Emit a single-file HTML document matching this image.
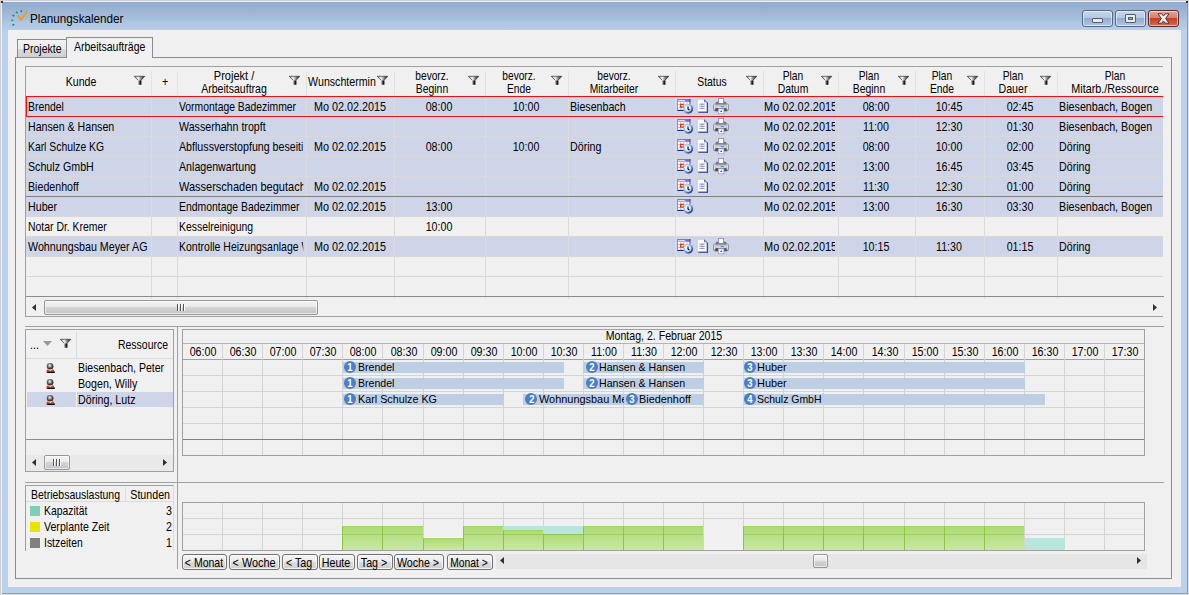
<!DOCTYPE html>
<html lang="de"><head><meta charset="utf-8"><title>Planungskalender</title>
<style>
html,body{margin:0;padding:0;}
body{width:1189px;height:595px;overflow:hidden;background:#b9d1ea;font-family:"Liberation Sans",sans-serif;font-size:13px;color:#000;position:relative;}
div,span{position:absolute;box-sizing:border-box;white-space:nowrap;}
svg{position:absolute;overflow:visible;}
.hl{background:#ced5e8;}
.btn{border:1px solid #707070;border-radius:3px;background:linear-gradient(#f4f4f4 0%,#ebebeb 48%,#dcdcdc 52%,#cfcfcf 100%);box-shadow:inset 0 0 0 1px rgba(255,255,255,.75);height:16px;}
.thumb{border:1px solid #979797;border-radius:2px;background:linear-gradient(#f3f3f3 0%,#e9e9ea 45%,#d5d5d8 50%,#c3c3c8 100%);box-shadow:inset 0 0 0 1px rgba(255,255,255,.6);}
.bar{background:#bfcfe3;height:11px;}
.num{width:12px;height:12px;border-radius:50%;background:#4a7ec6;}

</style></head><body>
<svg width="0" height="0" style="left:0;top:0"><defs><linearGradient id="fg" x1="0" x2="1"><stop offset="0" stop-color="#8a8a8a"/><stop offset=".38" stop-color="#f6f6f6"/><stop offset=".7" stop-color="#707070"/><stop offset="1" stop-color="#101010"/></linearGradient><linearGradient id="fs" x1="0" x2="1"><stop offset="0" stop-color="#a0a0a0"/><stop offset=".5" stop-color="#404040"/><stop offset="1" stop-color="#000"/></linearGradient><radialGradient id="hd" cx=".45" cy=".4" r=".62"><stop offset="0" stop-color="#fff"/><stop offset=".4" stop-color="#8a8a8a"/><stop offset=".85" stop-color="#2a2a2a"/><stop offset="1" stop-color="#1a1a1a"/></radialGradient><radialGradient id="cf" cx=".4" cy=".35" r=".8"><stop offset="0" stop-color="#fff"/><stop offset="1" stop-color="#bccadf"/></radialGradient><linearGradient id="pb" x1="0" x2="1"><stop offset="0" stop-color="#8a8c90"/><stop offset=".1" stop-color="#f4f4f4"/><stop offset=".25" stop-color="#a4a6aa"/><stop offset=".75" stop-color="#a4a6aa"/><stop offset=".9" stop-color="#f4f4f4"/><stop offset="1" stop-color="#7a7c80"/></linearGradient><linearGradient id="ck" x1="0" y1="0" x2="1" y2="1"><stop offset="0" stop-color="#e4f1ff"/><stop offset=".4" stop-color="#86b8ea"/><stop offset=".75" stop-color="#3654aa"/><stop offset="1" stop-color="#0e1658"/></linearGradient></defs></svg>
<div style="left:0px;top:0px;width:1189px;height:595px;background:#dcdcdc;"></div>
<div style="left:1px;top:1px;width:1187px;height:593px;background:#2fc3e8;"></div>
<div style="left:1px;top:1px;width:1186px;height:592px;background:#b9d1ea;"></div>
<div style="left:1px;top:2px;width:1186px;height:28px;background:linear-gradient(#93abd0 0%,#95b0d0 18%,#98b5d2 28%,#a3b5d5 36%,#a2bbda 50%,#a8c1de 64%,#b0c8e3 76%,#b2cae5 90%,#b7d1eb 100%);"></div>
<div style="left:0px;top:0px;width:1189px;height:1px;background:#d0d0d0;"></div>
<div style="left:0px;top:0px;width:1px;height:595px;background:#d0d0d0;"></div>
<div style="left:1px;top:1px;width:1187px;height:1px;background:#f0f0f0;"></div>
<div style="left:1px;top:1px;width:1px;height:593px;background:#f0f0f0;"></div>
<div style="left:1px;top:1px;width:2px;height:2px;background:#303030;"></div>
<div style="left:1186px;top:1px;width:2px;height:2px;background:#303030;"></div>
<div style="left:8px;top:30px;width:1173px;height:557px;background:#f0f0f0;"></div>
<svg style="left:10px;top:9px" width="18" height="18" viewBox="0 0 18 18"><g fill="#138a63"><ellipse cx="11.3" cy="2.2" rx=".8" ry="1.1" transform="rotate(15 11.3 2.2)"/><ellipse cx="6.8" cy="3.4" rx="1.1" ry=".8" transform="rotate(30 6.8 3.4)"/><ellipse cx="3.4" cy="6.6" rx="1.1" ry=".8" transform="rotate(20 3.4 6.6)"/><ellipse cx="2.2" cy="11.2" rx="1.1" ry=".7"/><ellipse cx="3.4" cy="15.8" rx="1.2" ry=".8" transform="rotate(-30 3.4 15.8)"/></g><path d="M8.6 7.2 L11.3 11 L16.6 2.6" fill="none" stroke="#f39a12" stroke-width="1.7" stroke-linecap="round" stroke-linejoin="round"/></svg>
<div style="top:11.00px;font-size:13px;line-height:15px;height:15px;left:30.4px;transform-origin:0 0;transform:scaleX(0.898);">Planungskalender</div>
<div style="left:1082px;top:10px;width:31px;height:17px;border:1px solid #56698a;border-radius:3px;background:linear-gradient(#c6d7ec 0%,#b4c8e2 45%,#93adcf 50%,#b0c6e2 100%);box-shadow:inset 0 0 0 1px rgba(255,255,255,.55);"></div>
<div style="left:1115px;top:10px;width:31px;height:17px;border:1px solid #56698a;border-radius:3px;background:linear-gradient(#c6d7ec 0%,#b4c8e2 45%,#93adcf 50%,#b0c6e2 100%);box-shadow:inset 0 0 0 1px rgba(255,255,255,.55);"></div>
<div style="left:1148px;top:10px;width:31px;height:17px;border:1px solid #5a2a2a;border-radius:3px;background:linear-gradient(#e3a597 0%,#d5806d 45%,#c1422a 50%,#cf6a4e 100%);box-shadow:inset 0 0 0 1px rgba(255,255,255,.55);"></div>
<div style="left:1092px;top:18px;width:11px;height:5px;background:#e9e9e9;border:1px solid #555e6e;border-radius:1px;"></div>
<div style="left:1125px;top:14px;width:11px;height:9px;background:#e9e9e9;border:1px solid #555e6e;border-radius:1px;"></div>
<div style="left:1128px;top:17px;width:5px;height:3px;background:#8da6c8;border:1px solid #555e6e;"></div>
<svg style="left:1157px;top:13px" width="13" height="11" viewBox="0 0 13 11"><path d="M1 0.8 L4.7 0.8 L6.5 3.1 L8.3 0.8 L12 0.8 L8.6 5.5 L12 10.2 L8.3 10.2 L6.5 7.9 L4.7 10.2 L1 10.2 L4.4 5.5 Z" fill="#f4f4f4" stroke="#54302c" stroke-width="1"/></svg>
<div style="left:15px;top:57px;width:1157px;height:522px;border:1px solid #898c95;"></div>
<div style="left:17px;top:39px;width:50px;height:18px;border:1px solid #898c95;border-bottom:none;background:linear-gradient(#f2f2f2 0%,#ebebeb 50%,#dddddd 50%,#cfcfcf 100%);"></div>
<div style="top:41.00px;font-size:13px;line-height:15px;height:15px;left:23px;transform-origin:0 0;transform:scaleX(0.809);">Projekte</div>
<div style="left:66px;top:37px;width:87px;height:21px;border:1px solid #898c95;border-bottom:none;background:#f0f0f0;"></div>
<div style="top:39.00px;font-size:13px;line-height:15px;height:15px;left:73.6px;transform-origin:0 0;transform:scaleX(0.809);">Arbeitsaufträge</div>
<div style="left:25px;top:66px;width:1139px;height:251px;border:1px solid #a0a0a0;border-right:none;"></div>
<div class="hl" style="left:26px;top:97px;width:1138px;height:20px;"></div>
<div class="hl" style="left:26px;top:117px;width:1138px;height:20px;"></div>
<div class="hl" style="left:26px;top:137px;width:1138px;height:20px;"></div>
<div class="hl" style="left:26px;top:157px;width:1138px;height:20px;"></div>
<div class="hl" style="left:26px;top:177px;width:1138px;height:20px;"></div>
<div class="hl" style="left:26px;top:197px;width:1138px;height:20px;"></div>
<div class="hl" style="left:26px;top:237px;width:1138px;height:20px;"></div>
<div style="left:26px;top:116px;width:1138px;height:1px;background:#d8d8da;"></div>
<div style="left:26px;top:136px;width:1138px;height:1px;background:#d8d8da;"></div>
<div style="left:26px;top:156px;width:1138px;height:1px;background:#d8d8da;"></div>
<div style="left:26px;top:176px;width:1138px;height:1px;background:#d8d8da;"></div>
<div style="left:26px;top:196px;width:1138px;height:1px;background:#d8d8da;"></div>
<div style="left:26px;top:216px;width:1138px;height:1px;background:#d8d8da;"></div>
<div style="left:26px;top:236px;width:1138px;height:1px;background:#d8d8da;"></div>
<div style="left:26px;top:256px;width:1138px;height:1px;background:#d8d8da;"></div>
<div style="left:26px;top:276px;width:1138px;height:1px;background:#d8d8da;"></div>
<div style="left:151px;top:71px;width:1px;height:25px;background:#e2e2e2;"></div>
<div style="left:151px;top:97px;width:1px;height:202px;background:#d9dbe0;"></div>
<div style="left:177px;top:71px;width:1px;height:25px;background:#e2e2e2;"></div>
<div style="left:177px;top:97px;width:1px;height:202px;background:#d9dbe0;"></div>
<div style="left:306px;top:71px;width:1px;height:25px;background:#e2e2e2;"></div>
<div style="left:306px;top:97px;width:1px;height:202px;background:#d9dbe0;"></div>
<div style="left:394px;top:71px;width:1px;height:25px;background:#e2e2e2;"></div>
<div style="left:394px;top:97px;width:1px;height:202px;background:#d9dbe0;"></div>
<div style="left:485px;top:71px;width:1px;height:25px;background:#e2e2e2;"></div>
<div style="left:485px;top:97px;width:1px;height:202px;background:#d9dbe0;"></div>
<div style="left:568px;top:71px;width:1px;height:25px;background:#e2e2e2;"></div>
<div style="left:568px;top:97px;width:1px;height:202px;background:#d9dbe0;"></div>
<div style="left:675px;top:71px;width:1px;height:25px;background:#e2e2e2;"></div>
<div style="left:675px;top:97px;width:1px;height:202px;background:#d9dbe0;"></div>
<div style="left:763px;top:71px;width:1px;height:25px;background:#e2e2e2;"></div>
<div style="left:763px;top:97px;width:1px;height:202px;background:#d9dbe0;"></div>
<div style="left:838px;top:71px;width:1px;height:25px;background:#e2e2e2;"></div>
<div style="left:838px;top:97px;width:1px;height:202px;background:#d9dbe0;"></div>
<div style="left:915px;top:71px;width:1px;height:25px;background:#e2e2e2;"></div>
<div style="left:915px;top:97px;width:1px;height:202px;background:#d9dbe0;"></div>
<div style="left:984px;top:71px;width:1px;height:25px;background:#e2e2e2;"></div>
<div style="left:984px;top:97px;width:1px;height:202px;background:#d9dbe0;"></div>
<div style="left:1057px;top:71px;width:1px;height:25px;background:#e2e2e2;"></div>
<div style="left:1057px;top:97px;width:1px;height:202px;background:#d9dbe0;"></div>
<div style="left:26px;top:196px;width:1138px;height:1px;background:#808080;"></div>
<div style="left:26px;top:96px;width:1139px;height:21px;border:1px solid #ee1111;border-right:none;"></div>
<div style="top:74.00px;font-size:13px;line-height:15px;height:15px;left:-69.25px;width:300px;text-align:center;transform-origin:50% 0;transform:scaleX(0.814);">Kunde</div>
<svg style="left:134px;top:76px" width="11" height="9" viewBox="0 0 11 9"><path d="M0.2 0.3 L10.8 0.3 L7.1 4.3 L7.1 8.7 L4.2 8.7 L4.2 4.3 Z" fill="url(#fg)"/><path d="M0.2 0.3 L10.8 0.3 M10.8 0.3 L7.1 4.3 L7.1 8.7 M0.2 0.3 L4.2 4.3" fill="none" stroke="#3a3a3a" stroke-width="0.7"/><rect x="4.3" y="4.6" width="2.8" height="4.1" fill="url(#fs)"/></svg>
<div style="top:74.00px;font-size:13px;line-height:15px;height:15px;left:14.5px;width:300px;text-align:center;transform-origin:50% 0;transform:scaleX(0.820);">+</div>
<div style="top:68.00px;font-size:13px;line-height:15px;height:15px;left:83.9px;width:300px;text-align:center;transform-origin:50% 0;transform:scaleX(0.847);">Projekt /</div>
<div style="top:81.00px;font-size:13px;line-height:15px;height:15px;left:83.9px;width:300px;text-align:center;transform-origin:50% 0;transform:scaleX(0.812);">Arbeitsauftrag</div>
<svg style="left:289px;top:76px" width="11" height="9" viewBox="0 0 11 9"><path d="M0.2 0.3 L10.8 0.3 L7.1 4.3 L7.1 8.7 L4.2 8.7 L4.2 4.3 Z" fill="url(#fg)"/><path d="M0.2 0.3 L10.8 0.3 M10.8 0.3 L7.1 4.3 L7.1 8.7 M0.2 0.3 L4.2 4.3" fill="none" stroke="#3a3a3a" stroke-width="0.7"/><rect x="4.3" y="4.6" width="2.8" height="4.1" fill="url(#fs)"/></svg>
<div style="top:74.00px;font-size:13px;line-height:15px;height:15px;left:192.3px;width:300px;text-align:center;transform-origin:50% 0;transform:scaleX(0.818);">Wunschtermin</div>
<svg style="left:377px;top:76px" width="11" height="9" viewBox="0 0 11 9"><path d="M0.2 0.3 L10.8 0.3 L7.1 4.3 L7.1 8.7 L4.2 8.7 L4.2 4.3 Z" fill="url(#fg)"/><path d="M0.2 0.3 L10.8 0.3 M10.8 0.3 L7.1 4.3 L7.1 8.7 M0.2 0.3 L4.2 4.3" fill="none" stroke="#3a3a3a" stroke-width="0.7"/><rect x="4.3" y="4.6" width="2.8" height="4.1" fill="url(#fs)"/></svg>
<div style="top:68.00px;font-size:13px;line-height:15px;height:15px;left:281.7px;width:300px;text-align:center;transform-origin:50% 0;transform:scaleX(0.781);">bevorz.</div>
<div style="top:81.00px;font-size:13px;line-height:15px;height:15px;left:281.7px;width:300px;text-align:center;transform-origin:50% 0;transform:scaleX(0.800);">Beginn</div>
<svg style="left:468px;top:76px" width="11" height="9" viewBox="0 0 11 9"><path d="M0.2 0.3 L10.8 0.3 L7.1 4.3 L7.1 8.7 L4.2 8.7 L4.2 4.3 Z" fill="url(#fg)"/><path d="M0.2 0.3 L10.8 0.3 M10.8 0.3 L7.1 4.3 L7.1 8.7 M0.2 0.3 L4.2 4.3" fill="none" stroke="#3a3a3a" stroke-width="0.7"/><rect x="4.3" y="4.6" width="2.8" height="4.1" fill="url(#fs)"/></svg>
<div style="top:68.00px;font-size:13px;line-height:15px;height:15px;left:368.65px;width:300px;text-align:center;transform-origin:50% 0;transform:scaleX(0.781);">bevorz.</div>
<div style="top:81.00px;font-size:13px;line-height:15px;height:15px;left:368.65px;width:300px;text-align:center;transform-origin:50% 0;transform:scaleX(0.790);">Ende</div>
<svg style="left:551px;top:76px" width="11" height="9" viewBox="0 0 11 9"><path d="M0.2 0.3 L10.8 0.3 L7.1 4.3 L7.1 8.7 L4.2 8.7 L4.2 4.3 Z" fill="url(#fg)"/><path d="M0.2 0.3 L10.8 0.3 M10.8 0.3 L7.1 4.3 L7.1 8.7 M0.2 0.3 L4.2 4.3" fill="none" stroke="#3a3a3a" stroke-width="0.7"/><rect x="4.3" y="4.6" width="2.8" height="4.1" fill="url(#fs)"/></svg>
<div style="top:68.00px;font-size:13px;line-height:15px;height:15px;left:463.85px;width:300px;text-align:center;transform-origin:50% 0;transform:scaleX(0.781);">bevorz.</div>
<div style="top:81.00px;font-size:13px;line-height:15px;height:15px;left:463.85px;width:300px;text-align:center;transform-origin:50% 0;transform:scaleX(0.788);">Mitarbeiter</div>
<svg style="left:658px;top:76px" width="11" height="9" viewBox="0 0 11 9"><path d="M0.2 0.3 L10.8 0.3 L7.1 4.3 L7.1 8.7 L4.2 8.7 L4.2 4.3 Z" fill="url(#fg)"/><path d="M0.2 0.3 L10.8 0.3 M10.8 0.3 L7.1 4.3 L7.1 8.7 M0.2 0.3 L4.2 4.3" fill="none" stroke="#3a3a3a" stroke-width="0.7"/><rect x="4.3" y="4.6" width="2.8" height="4.1" fill="url(#fs)"/></svg>
<div style="top:74.00px;font-size:13px;line-height:15px;height:15px;left:561.5px;width:300px;text-align:center;transform-origin:50% 0;transform:scaleX(0.798);">Status</div>
<svg style="left:746px;top:76px" width="11" height="9" viewBox="0 0 11 9"><path d="M0.2 0.3 L10.8 0.3 L7.1 4.3 L7.1 8.7 L4.2 8.7 L4.2 4.3 Z" fill="url(#fg)"/><path d="M0.2 0.3 L10.8 0.3 M10.8 0.3 L7.1 4.3 L7.1 8.7 M0.2 0.3 L4.2 4.3" fill="none" stroke="#3a3a3a" stroke-width="0.7"/><rect x="4.3" y="4.6" width="2.8" height="4.1" fill="url(#fs)"/></svg>
<div style="top:68.00px;font-size:13px;line-height:15px;height:15px;left:642.9px;width:300px;text-align:center;transform-origin:50% 0;transform:scaleX(0.788);">Plan</div>
<div style="top:81.00px;font-size:13px;line-height:15px;height:15px;left:642.9px;width:300px;text-align:center;transform-origin:50% 0;transform:scaleX(0.799);">Datum</div>
<svg style="left:821px;top:76px" width="11" height="9" viewBox="0 0 11 9"><path d="M0.2 0.3 L10.8 0.3 L7.1 4.3 L7.1 8.7 L4.2 8.7 L4.2 4.3 Z" fill="url(#fg)"/><path d="M0.2 0.3 L10.8 0.3 M10.8 0.3 L7.1 4.3 L7.1 8.7 M0.2 0.3 L4.2 4.3" fill="none" stroke="#3a3a3a" stroke-width="0.7"/><rect x="4.3" y="4.6" width="2.8" height="4.1" fill="url(#fs)"/></svg>
<div style="top:68.00px;font-size:13px;line-height:15px;height:15px;left:718.85px;width:300px;text-align:center;transform-origin:50% 0;transform:scaleX(0.788);">Plan</div>
<div style="top:81.00px;font-size:13px;line-height:15px;height:15px;left:718.85px;width:300px;text-align:center;transform-origin:50% 0;transform:scaleX(0.800);">Beginn</div>
<svg style="left:898px;top:76px" width="11" height="9" viewBox="0 0 11 9"><path d="M0.2 0.3 L10.8 0.3 L7.1 4.3 L7.1 8.7 L4.2 8.7 L4.2 4.3 Z" fill="url(#fg)"/><path d="M0.2 0.3 L10.8 0.3 M10.8 0.3 L7.1 4.3 L7.1 8.7 M0.2 0.3 L4.2 4.3" fill="none" stroke="#3a3a3a" stroke-width="0.7"/><rect x="4.3" y="4.6" width="2.8" height="4.1" fill="url(#fs)"/></svg>
<div style="top:68.00px;font-size:13px;line-height:15px;height:15px;left:791.85px;width:300px;text-align:center;transform-origin:50% 0;transform:scaleX(0.788);">Plan</div>
<div style="top:81.00px;font-size:13px;line-height:15px;height:15px;left:791.85px;width:300px;text-align:center;transform-origin:50% 0;transform:scaleX(0.790);">Ende</div>
<svg style="left:967px;top:76px" width="11" height="9" viewBox="0 0 11 9"><path d="M0.2 0.3 L10.8 0.3 L7.1 4.3 L7.1 8.7 L4.2 8.7 L4.2 4.3 Z" fill="url(#fg)"/><path d="M0.2 0.3 L10.8 0.3 M10.8 0.3 L7.1 4.3 L7.1 8.7 M0.2 0.3 L4.2 4.3" fill="none" stroke="#3a3a3a" stroke-width="0.7"/><rect x="4.3" y="4.6" width="2.8" height="4.1" fill="url(#fs)"/></svg>
<div style="top:68.00px;font-size:13px;line-height:15px;height:15px;left:862.8px;width:300px;text-align:center;transform-origin:50% 0;transform:scaleX(0.788);">Plan</div>
<div style="top:81.00px;font-size:13px;line-height:15px;height:15px;left:862.8px;width:300px;text-align:center;transform-origin:50% 0;transform:scaleX(0.816);">Dauer</div>
<svg style="left:1040px;top:76px" width="11" height="9" viewBox="0 0 11 9"><path d="M0.2 0.3 L10.8 0.3 L7.1 4.3 L7.1 8.7 L4.2 8.7 L4.2 4.3 Z" fill="url(#fg)"/><path d="M0.2 0.3 L10.8 0.3 M10.8 0.3 L7.1 4.3 L7.1 8.7 M0.2 0.3 L4.2 4.3" fill="none" stroke="#3a3a3a" stroke-width="0.7"/><rect x="4.3" y="4.6" width="2.8" height="4.1" fill="url(#fs)"/></svg>
<div style="top:68.00px;font-size:13px;line-height:15px;height:15px;left:965.2px;width:300px;text-align:center;transform-origin:50% 0;transform:scaleX(0.788);">Plan</div>
<div style="top:81.00px;font-size:13px;line-height:15px;height:15px;left:965.2px;width:300px;text-align:center;transform-origin:50% 0;transform:scaleX(0.829);">Mitarb./Ressource</div>
<div style="top:99.00px;font-size:13px;line-height:15px;height:15px;left:28px;transform-origin:0 0;width:150.5px;overflow:hidden;transform:scaleX(0.799);">Brendel</div>
<div style="top:99.00px;font-size:13px;line-height:15px;height:15px;left:179px;transform-origin:0 0;width:155.5px;overflow:hidden;transform:scaleX(0.798);">Vormontage Badezimmer</div>
<div style="top:99.00px;font-size:13px;line-height:15px;height:15px;left:199.7px;width:300px;text-align:center;transform-origin:50% 0;transform:scaleX(0.832);">Mo 02.02.2015</div>
<div style="top:99.00px;font-size:13px;line-height:15px;height:15px;left:289.1px;width:300px;text-align:center;transform-origin:50% 0;transform:scaleX(0.820);">08:00</div>
<div style="top:99.00px;font-size:13px;line-height:15px;height:15px;left:376.05px;width:300px;text-align:center;transform-origin:50% 0;transform:scaleX(0.820);">10:00</div>
<div style="top:99.00px;font-size:13px;line-height:15px;height:15px;left:570px;transform-origin:0 0;width:124.9px;overflow:hidden;transform:scaleX(0.818);">Biesenbach</div>
<svg style="left:677px;top:99px" width="16" height="15" viewBox="0 0 16 15"><rect x="0.3" y="0.3" width="12.8" height="11.2" fill="#fdfdff"/><path d="M1 5.6 H13 M1 8.6 H13 M3.8 3 V11 M6.9 3 V11 M10 3 V11" stroke="#b4b4c8" stroke-width="0.9" fill="none"/><rect x="0" y="0" width="13.3" height="2.6" fill="#7878ee"/><rect x="1.2" y="1.1" width="6.6" height="0.9" fill="#ececff"/><rect x="8.6" y="0.4" width="4.4" height="2.2" fill="#8a6ae0"/><rect x="0" y="0" width="1" height="11.6" fill="#8c8ce0"/><rect x="12.5" y="0" width="0.9" height="5.4" fill="#3434a0"/><rect x="0.4" y="10.9" width="7" height="1.1" fill="#26266a"/><path d="M6.6 5.4 H3.6 V8.1 H6.6 V6.9" fill="none" stroke="#e8380c" stroke-width="1.2"/><circle cx="11.2" cy="9.8" r="4.9" fill="url(#ck)"/><circle cx="11" cy="9.6" r="3.3" fill="url(#cf)"/><path d="M11 7.4 V10 L12.4 11" stroke="#101018" stroke-width="1.2" fill="none"/></svg>
<svg style="left:697px;top:99px" width="11" height="14" viewBox="0 0 11 14"><path d="M1.4 1.2 H8 L11 4 V13.8 H1.4 Z" fill="#1e2468"/><path d="M0.3 0.3 H7.4 L9.8 2.8 V12.6 H0.3 Z" fill="#fcfcfc" stroke="#a9c6ee" stroke-width="0.7"/><path d="M7.2 0.3 L10 3.2 H7.2 Z" fill="#28307a"/><circle cx="8.2" cy="2.2" r="0.7" fill="#c8d4f4"/><path d="M2.2 5.2 H7.8 M2.2 7.3 H7.8 M2.2 9.4 H7.8" stroke="#9a9aa6" stroke-width="0.9"/><path d="M4 5.2 H6.4 M4 7.3 H6.4 M4 9.4 H6.4" stroke="#7f86d8" stroke-width="0.9"/></svg>
<svg style="left:713px;top:98px" width="16" height="16" viewBox="0 0 16 16"><rect x="5.6" y="0.4" width="5" height="5" fill="#fdfdfd" stroke="#9288d8" stroke-width="0.9"/><path d="M3.4 3.8 H5.2 V5.4 H10.9 V3.8 H12.6 L14 6.8 H2 Z" fill="#6c6e72"/><rect x="0.2" y="5.6" width="15.6" height="7.6" rx="1.8" fill="#85878b"/><rect x="1.2" y="6.2" width="1.4" height="5.6" rx="0.7" fill="#f0f0f0"/><rect x="13.4" y="6.2" width="1.4" height="5.6" rx="0.7" fill="#f0f0f0"/><rect x="3" y="6.8" width="10" height="3.4" fill="#d2d3d6"/><rect x="3" y="6.8" width="10" height="0.9" fill="#b6b7ba"/><rect x="7.8" y="8" width="3.1" height="1.1" fill="#4a90f0"/><rect x="2.4" y="10.2" width="11.2" height="3" fill="#4c4e52"/><rect x="5.3" y="10.8" width="5.6" height="5" fill="#f6f8ff" stroke="#9aa2cc" stroke-width="0.8"/><path d="M8.2 11.9 L9.3 13.9 H7.1 Z" fill="#3450e0"/></svg>
<div style="top:99.00px;font-size:13px;line-height:15px;height:15px;left:763.7px;transform-origin:0 0;width:83.7px;overflow:hidden;transform:scaleX(0.844);">Mo 02.02.2015</div>
<div style="top:99.00px;font-size:13px;line-height:15px;height:15px;left:726.25px;width:300px;text-align:center;transform-origin:50% 0;transform:scaleX(0.820);">08:00</div>
<div style="top:99.00px;font-size:13px;line-height:15px;height:15px;left:799.25px;width:300px;text-align:center;transform-origin:50% 0;transform:scaleX(0.820);">10:45</div>
<div style="top:99.00px;font-size:13px;line-height:15px;height:15px;left:870.2px;width:300px;text-align:center;transform-origin:50% 0;transform:scaleX(0.820);">02:45</div>
<div style="top:99.00px;font-size:13px;line-height:15px;height:15px;left:1058.7px;transform-origin:0 0;width:127.2px;overflow:hidden;transform:scaleX(0.826);">Biesenbach, Bogen</div>
<div style="top:119.00px;font-size:13px;line-height:15px;height:15px;left:28px;transform-origin:0 0;width:147.1px;overflow:hidden;transform:scaleX(0.817);">Hansen &amp; Hansen</div>
<div style="top:119.00px;font-size:13px;line-height:15px;height:15px;left:179px;transform-origin:0 0;width:151.2px;overflow:hidden;transform:scaleX(0.820);">Wasserhahn tropft</div>
<svg style="left:677px;top:119px" width="16" height="15" viewBox="0 0 16 15"><rect x="0.3" y="0.3" width="12.8" height="11.2" fill="#fdfdff"/><path d="M1 5.6 H13 M1 8.6 H13 M3.8 3 V11 M6.9 3 V11 M10 3 V11" stroke="#b4b4c8" stroke-width="0.9" fill="none"/><rect x="0" y="0" width="13.3" height="2.6" fill="#7878ee"/><rect x="1.2" y="1.1" width="6.6" height="0.9" fill="#ececff"/><rect x="8.6" y="0.4" width="4.4" height="2.2" fill="#8a6ae0"/><rect x="0" y="0" width="1" height="11.6" fill="#8c8ce0"/><rect x="12.5" y="0" width="0.9" height="5.4" fill="#3434a0"/><rect x="0.4" y="10.9" width="7" height="1.1" fill="#26266a"/><path d="M6.6 5.4 H3.6 V8.1 H6.6 V6.9" fill="none" stroke="#e8380c" stroke-width="1.2"/><circle cx="11.2" cy="9.8" r="4.9" fill="url(#ck)"/><circle cx="11" cy="9.6" r="3.3" fill="url(#cf)"/><path d="M11 7.4 V10 L12.4 11" stroke="#101018" stroke-width="1.2" fill="none"/></svg>
<svg style="left:697px;top:119px" width="11" height="14" viewBox="0 0 11 14"><path d="M1.4 1.2 H8 L11 4 V13.8 H1.4 Z" fill="#1e2468"/><path d="M0.3 0.3 H7.4 L9.8 2.8 V12.6 H0.3 Z" fill="#fcfcfc" stroke="#a9c6ee" stroke-width="0.7"/><path d="M7.2 0.3 L10 3.2 H7.2 Z" fill="#28307a"/><circle cx="8.2" cy="2.2" r="0.7" fill="#c8d4f4"/><path d="M2.2 5.2 H7.8 M2.2 7.3 H7.8 M2.2 9.4 H7.8" stroke="#9a9aa6" stroke-width="0.9"/><path d="M4 5.2 H6.4 M4 7.3 H6.4 M4 9.4 H6.4" stroke="#7f86d8" stroke-width="0.9"/></svg>
<svg style="left:713px;top:118px" width="16" height="16" viewBox="0 0 16 16"><rect x="5.6" y="0.4" width="5" height="5" fill="#fdfdfd" stroke="#9288d8" stroke-width="0.9"/><path d="M3.4 3.8 H5.2 V5.4 H10.9 V3.8 H12.6 L14 6.8 H2 Z" fill="#6c6e72"/><rect x="0.2" y="5.6" width="15.6" height="7.6" rx="1.8" fill="#85878b"/><rect x="1.2" y="6.2" width="1.4" height="5.6" rx="0.7" fill="#f0f0f0"/><rect x="13.4" y="6.2" width="1.4" height="5.6" rx="0.7" fill="#f0f0f0"/><rect x="3" y="6.8" width="10" height="3.4" fill="#d2d3d6"/><rect x="3" y="6.8" width="10" height="0.9" fill="#b6b7ba"/><rect x="7.8" y="8" width="3.1" height="1.1" fill="#4a90f0"/><rect x="2.4" y="10.2" width="11.2" height="3" fill="#4c4e52"/><rect x="5.3" y="10.8" width="5.6" height="5" fill="#f6f8ff" stroke="#9aa2cc" stroke-width="0.8"/><path d="M8.2 11.9 L9.3 13.9 H7.1 Z" fill="#3450e0"/></svg>
<div style="top:119.00px;font-size:13px;line-height:15px;height:15px;left:763.7px;transform-origin:0 0;width:83.7px;overflow:hidden;transform:scaleX(0.844);">Mo 02.02.2015</div>
<div style="top:119.00px;font-size:13px;line-height:15px;height:15px;left:726.25px;width:300px;text-align:center;transform-origin:50% 0;transform:scaleX(0.820);">11:00</div>
<div style="top:119.00px;font-size:13px;line-height:15px;height:15px;left:799.25px;width:300px;text-align:center;transform-origin:50% 0;transform:scaleX(0.820);">12:30</div>
<div style="top:119.00px;font-size:13px;line-height:15px;height:15px;left:870.2px;width:300px;text-align:center;transform-origin:50% 0;transform:scaleX(0.820);">01:30</div>
<div style="top:119.00px;font-size:13px;line-height:15px;height:15px;left:1058.7px;transform-origin:0 0;width:127.2px;overflow:hidden;transform:scaleX(0.826);">Biesenbach, Bogen</div>
<div style="top:139.00px;font-size:13px;line-height:15px;height:15px;left:28px;transform-origin:0 0;width:150.8px;overflow:hidden;transform:scaleX(0.797);">Karl Schulze KG</div>
<div style="top:139.00px;font-size:13px;line-height:15px;height:15px;left:179px;transform-origin:0 0;width:151.2px;overflow:hidden;transform:scaleX(0.820);">Abflussverstopfung beseitigen</div>
<div style="top:139.00px;font-size:13px;line-height:15px;height:15px;left:199.7px;width:300px;text-align:center;transform-origin:50% 0;transform:scaleX(0.832);">Mo 02.02.2015</div>
<div style="top:139.00px;font-size:13px;line-height:15px;height:15px;left:289.1px;width:300px;text-align:center;transform-origin:50% 0;transform:scaleX(0.820);">08:00</div>
<div style="top:139.00px;font-size:13px;line-height:15px;height:15px;left:376.05px;width:300px;text-align:center;transform-origin:50% 0;transform:scaleX(0.820);">10:00</div>
<div style="top:139.00px;font-size:13px;line-height:15px;height:15px;left:570px;transform-origin:0 0;width:124.6px;overflow:hidden;transform:scaleX(0.820);">Döring</div>
<svg style="left:677px;top:139px" width="16" height="15" viewBox="0 0 16 15"><rect x="0.3" y="0.3" width="12.8" height="11.2" fill="#fdfdff"/><path d="M1 5.6 H13 M1 8.6 H13 M3.8 3 V11 M6.9 3 V11 M10 3 V11" stroke="#b4b4c8" stroke-width="0.9" fill="none"/><rect x="0" y="0" width="13.3" height="2.6" fill="#7878ee"/><rect x="1.2" y="1.1" width="6.6" height="0.9" fill="#ececff"/><rect x="8.6" y="0.4" width="4.4" height="2.2" fill="#8a6ae0"/><rect x="0" y="0" width="1" height="11.6" fill="#8c8ce0"/><rect x="12.5" y="0" width="0.9" height="5.4" fill="#3434a0"/><rect x="0.4" y="10.9" width="7" height="1.1" fill="#26266a"/><path d="M6.6 5.4 H3.6 V8.1 H6.6 V6.9" fill="none" stroke="#e8380c" stroke-width="1.2"/><circle cx="11.2" cy="9.8" r="4.9" fill="url(#ck)"/><circle cx="11" cy="9.6" r="3.3" fill="url(#cf)"/><path d="M11 7.4 V10 L12.4 11" stroke="#101018" stroke-width="1.2" fill="none"/></svg>
<svg style="left:697px;top:139px" width="11" height="14" viewBox="0 0 11 14"><path d="M1.4 1.2 H8 L11 4 V13.8 H1.4 Z" fill="#1e2468"/><path d="M0.3 0.3 H7.4 L9.8 2.8 V12.6 H0.3 Z" fill="#fcfcfc" stroke="#a9c6ee" stroke-width="0.7"/><path d="M7.2 0.3 L10 3.2 H7.2 Z" fill="#28307a"/><circle cx="8.2" cy="2.2" r="0.7" fill="#c8d4f4"/><path d="M2.2 5.2 H7.8 M2.2 7.3 H7.8 M2.2 9.4 H7.8" stroke="#9a9aa6" stroke-width="0.9"/><path d="M4 5.2 H6.4 M4 7.3 H6.4 M4 9.4 H6.4" stroke="#7f86d8" stroke-width="0.9"/></svg>
<svg style="left:713px;top:138px" width="16" height="16" viewBox="0 0 16 16"><rect x="5.6" y="0.4" width="5" height="5" fill="#fdfdfd" stroke="#9288d8" stroke-width="0.9"/><path d="M3.4 3.8 H5.2 V5.4 H10.9 V3.8 H12.6 L14 6.8 H2 Z" fill="#6c6e72"/><rect x="0.2" y="5.6" width="15.6" height="7.6" rx="1.8" fill="#85878b"/><rect x="1.2" y="6.2" width="1.4" height="5.6" rx="0.7" fill="#f0f0f0"/><rect x="13.4" y="6.2" width="1.4" height="5.6" rx="0.7" fill="#f0f0f0"/><rect x="3" y="6.8" width="10" height="3.4" fill="#d2d3d6"/><rect x="3" y="6.8" width="10" height="0.9" fill="#b6b7ba"/><rect x="7.8" y="8" width="3.1" height="1.1" fill="#4a90f0"/><rect x="2.4" y="10.2" width="11.2" height="3" fill="#4c4e52"/><rect x="5.3" y="10.8" width="5.6" height="5" fill="#f6f8ff" stroke="#9aa2cc" stroke-width="0.8"/><path d="M8.2 11.9 L9.3 13.9 H7.1 Z" fill="#3450e0"/></svg>
<div style="top:139.00px;font-size:13px;line-height:15px;height:15px;left:763.7px;transform-origin:0 0;width:83.7px;overflow:hidden;transform:scaleX(0.844);">Mo 02.02.2015</div>
<div style="top:139.00px;font-size:13px;line-height:15px;height:15px;left:726.25px;width:300px;text-align:center;transform-origin:50% 0;transform:scaleX(0.820);">08:00</div>
<div style="top:139.00px;font-size:13px;line-height:15px;height:15px;left:799.25px;width:300px;text-align:center;transform-origin:50% 0;transform:scaleX(0.820);">10:00</div>
<div style="top:139.00px;font-size:13px;line-height:15px;height:15px;left:870.2px;width:300px;text-align:center;transform-origin:50% 0;transform:scaleX(0.820);">02:00</div>
<div style="top:139.00px;font-size:13px;line-height:15px;height:15px;left:1058.7px;transform-origin:0 0;width:128.0px;overflow:hidden;transform:scaleX(0.820);">Döring</div>
<div style="top:159.00px;font-size:13px;line-height:15px;height:15px;left:28px;transform-origin:0 0;width:146.6px;overflow:hidden;transform:scaleX(0.820);">Schulz GmbH</div>
<div style="top:159.00px;font-size:13px;line-height:15px;height:15px;left:179px;transform-origin:0 0;width:151.2px;overflow:hidden;transform:scaleX(0.820);">Anlagenwartung</div>
<svg style="left:677px;top:159px" width="16" height="15" viewBox="0 0 16 15"><rect x="0.3" y="0.3" width="12.8" height="11.2" fill="#fdfdff"/><path d="M1 5.6 H13 M1 8.6 H13 M3.8 3 V11 M6.9 3 V11 M10 3 V11" stroke="#b4b4c8" stroke-width="0.9" fill="none"/><rect x="0" y="0" width="13.3" height="2.6" fill="#7878ee"/><rect x="1.2" y="1.1" width="6.6" height="0.9" fill="#ececff"/><rect x="8.6" y="0.4" width="4.4" height="2.2" fill="#8a6ae0"/><rect x="0" y="0" width="1" height="11.6" fill="#8c8ce0"/><rect x="12.5" y="0" width="0.9" height="5.4" fill="#3434a0"/><rect x="0.4" y="10.9" width="7" height="1.1" fill="#26266a"/><path d="M6.6 5.4 H3.6 V8.1 H6.6 V6.9" fill="none" stroke="#e8380c" stroke-width="1.2"/><circle cx="11.2" cy="9.8" r="4.9" fill="url(#ck)"/><circle cx="11" cy="9.6" r="3.3" fill="url(#cf)"/><path d="M11 7.4 V10 L12.4 11" stroke="#101018" stroke-width="1.2" fill="none"/></svg>
<svg style="left:697px;top:159px" width="11" height="14" viewBox="0 0 11 14"><path d="M1.4 1.2 H8 L11 4 V13.8 H1.4 Z" fill="#1e2468"/><path d="M0.3 0.3 H7.4 L9.8 2.8 V12.6 H0.3 Z" fill="#fcfcfc" stroke="#a9c6ee" stroke-width="0.7"/><path d="M7.2 0.3 L10 3.2 H7.2 Z" fill="#28307a"/><circle cx="8.2" cy="2.2" r="0.7" fill="#c8d4f4"/><path d="M2.2 5.2 H7.8 M2.2 7.3 H7.8 M2.2 9.4 H7.8" stroke="#9a9aa6" stroke-width="0.9"/><path d="M4 5.2 H6.4 M4 7.3 H6.4 M4 9.4 H6.4" stroke="#7f86d8" stroke-width="0.9"/></svg>
<svg style="left:713px;top:158px" width="16" height="16" viewBox="0 0 16 16"><rect x="5.6" y="0.4" width="5" height="5" fill="#fdfdfd" stroke="#9288d8" stroke-width="0.9"/><path d="M3.4 3.8 H5.2 V5.4 H10.9 V3.8 H12.6 L14 6.8 H2 Z" fill="#6c6e72"/><rect x="0.2" y="5.6" width="15.6" height="7.6" rx="1.8" fill="#85878b"/><rect x="1.2" y="6.2" width="1.4" height="5.6" rx="0.7" fill="#f0f0f0"/><rect x="13.4" y="6.2" width="1.4" height="5.6" rx="0.7" fill="#f0f0f0"/><rect x="3" y="6.8" width="10" height="3.4" fill="#d2d3d6"/><rect x="3" y="6.8" width="10" height="0.9" fill="#b6b7ba"/><rect x="7.8" y="8" width="3.1" height="1.1" fill="#4a90f0"/><rect x="2.4" y="10.2" width="11.2" height="3" fill="#4c4e52"/><rect x="5.3" y="10.8" width="5.6" height="5" fill="#f6f8ff" stroke="#9aa2cc" stroke-width="0.8"/><path d="M8.2 11.9 L9.3 13.9 H7.1 Z" fill="#3450e0"/></svg>
<div style="top:159.00px;font-size:13px;line-height:15px;height:15px;left:763.7px;transform-origin:0 0;width:83.7px;overflow:hidden;transform:scaleX(0.844);">Mo 02.02.2015</div>
<div style="top:159.00px;font-size:13px;line-height:15px;height:15px;left:726.25px;width:300px;text-align:center;transform-origin:50% 0;transform:scaleX(0.820);">13:00</div>
<div style="top:159.00px;font-size:13px;line-height:15px;height:15px;left:799.25px;width:300px;text-align:center;transform-origin:50% 0;transform:scaleX(0.820);">16:45</div>
<div style="top:159.00px;font-size:13px;line-height:15px;height:15px;left:870.2px;width:300px;text-align:center;transform-origin:50% 0;transform:scaleX(0.820);">03:45</div>
<div style="top:159.00px;font-size:13px;line-height:15px;height:15px;left:1058.7px;transform-origin:0 0;width:128.0px;overflow:hidden;transform:scaleX(0.820);">Döring</div>
<div style="top:179.00px;font-size:13px;line-height:15px;height:15px;left:28px;transform-origin:0 0;width:146.6px;overflow:hidden;transform:scaleX(0.820);">Biedenhoff</div>
<div style="top:179.00px;font-size:13px;line-height:15px;height:15px;left:179px;transform-origin:0 0;width:146.6px;overflow:hidden;transform:scaleX(0.846);">Wasserschaden begutachten</div>
<div style="top:179.00px;font-size:13px;line-height:15px;height:15px;left:199.7px;width:300px;text-align:center;transform-origin:50% 0;transform:scaleX(0.832);">Mo 02.02.2015</div>
<svg style="left:677px;top:179px" width="16" height="15" viewBox="0 0 16 15"><rect x="0.3" y="0.3" width="12.8" height="11.2" fill="#fdfdff"/><path d="M1 5.6 H13 M1 8.6 H13 M3.8 3 V11 M6.9 3 V11 M10 3 V11" stroke="#b4b4c8" stroke-width="0.9" fill="none"/><rect x="0" y="0" width="13.3" height="2.6" fill="#7878ee"/><rect x="1.2" y="1.1" width="6.6" height="0.9" fill="#ececff"/><rect x="8.6" y="0.4" width="4.4" height="2.2" fill="#8a6ae0"/><rect x="0" y="0" width="1" height="11.6" fill="#8c8ce0"/><rect x="12.5" y="0" width="0.9" height="5.4" fill="#3434a0"/><rect x="0.4" y="10.9" width="7" height="1.1" fill="#26266a"/><path d="M6.6 5.4 H3.6 V8.1 H6.6 V6.9" fill="none" stroke="#e8380c" stroke-width="1.2"/><circle cx="11.2" cy="9.8" r="4.9" fill="url(#ck)"/><circle cx="11" cy="9.6" r="3.3" fill="url(#cf)"/><path d="M11 7.4 V10 L12.4 11" stroke="#101018" stroke-width="1.2" fill="none"/></svg>
<svg style="left:697px;top:179px" width="11" height="14" viewBox="0 0 11 14"><path d="M1.4 1.2 H8 L11 4 V13.8 H1.4 Z" fill="#1e2468"/><path d="M0.3 0.3 H7.4 L9.8 2.8 V12.6 H0.3 Z" fill="#fcfcfc" stroke="#a9c6ee" stroke-width="0.7"/><path d="M7.2 0.3 L10 3.2 H7.2 Z" fill="#28307a"/><circle cx="8.2" cy="2.2" r="0.7" fill="#c8d4f4"/><path d="M2.2 5.2 H7.8 M2.2 7.3 H7.8 M2.2 9.4 H7.8" stroke="#9a9aa6" stroke-width="0.9"/><path d="M4 5.2 H6.4 M4 7.3 H6.4 M4 9.4 H6.4" stroke="#7f86d8" stroke-width="0.9"/></svg>
<div style="top:179.00px;font-size:13px;line-height:15px;height:15px;left:763.7px;transform-origin:0 0;width:83.7px;overflow:hidden;transform:scaleX(0.844);">Mo 02.02.2015</div>
<div style="top:179.00px;font-size:13px;line-height:15px;height:15px;left:726.25px;width:300px;text-align:center;transform-origin:50% 0;transform:scaleX(0.820);">11:30</div>
<div style="top:179.00px;font-size:13px;line-height:15px;height:15px;left:799.25px;width:300px;text-align:center;transform-origin:50% 0;transform:scaleX(0.820);">12:30</div>
<div style="top:179.00px;font-size:13px;line-height:15px;height:15px;left:870.2px;width:300px;text-align:center;transform-origin:50% 0;transform:scaleX(0.820);">01:00</div>
<div style="top:179.00px;font-size:13px;line-height:15px;height:15px;left:1058.7px;transform-origin:0 0;width:128.0px;overflow:hidden;transform:scaleX(0.820);">Döring</div>
<div style="top:199.00px;font-size:13px;line-height:15px;height:15px;left:28px;transform-origin:0 0;width:146.6px;overflow:hidden;transform:scaleX(0.820);">Huber</div>
<div style="top:199.00px;font-size:13px;line-height:15px;height:15px;left:179px;transform-origin:0 0;width:154.7px;overflow:hidden;transform:scaleX(0.802);">Endmontage Badezimmer</div>
<div style="top:199.00px;font-size:13px;line-height:15px;height:15px;left:199.7px;width:300px;text-align:center;transform-origin:50% 0;transform:scaleX(0.832);">Mo 02.02.2015</div>
<div style="top:199.00px;font-size:13px;line-height:15px;height:15px;left:289.1px;width:300px;text-align:center;transform-origin:50% 0;transform:scaleX(0.820);">13:00</div>
<svg style="left:677px;top:199px" width="16" height="15" viewBox="0 0 16 15"><rect x="0.3" y="0.3" width="12.8" height="11.2" fill="#fdfdff"/><path d="M1 5.6 H13 M1 8.6 H13 M3.8 3 V11 M6.9 3 V11 M10 3 V11" stroke="#b4b4c8" stroke-width="0.9" fill="none"/><rect x="0" y="0" width="13.3" height="2.6" fill="#7878ee"/><rect x="1.2" y="1.1" width="6.6" height="0.9" fill="#ececff"/><rect x="8.6" y="0.4" width="4.4" height="2.2" fill="#8a6ae0"/><rect x="0" y="0" width="1" height="11.6" fill="#8c8ce0"/><rect x="12.5" y="0" width="0.9" height="5.4" fill="#3434a0"/><rect x="0.4" y="10.9" width="7" height="1.1" fill="#26266a"/><path d="M6.6 5.4 H3.6 V8.1 H6.6 V6.9" fill="none" stroke="#e8380c" stroke-width="1.2"/><circle cx="11.2" cy="9.8" r="4.9" fill="url(#ck)"/><circle cx="11" cy="9.6" r="3.3" fill="url(#cf)"/><path d="M11 7.4 V10 L12.4 11" stroke="#101018" stroke-width="1.2" fill="none"/></svg>
<div style="top:199.00px;font-size:13px;line-height:15px;height:15px;left:763.7px;transform-origin:0 0;width:83.7px;overflow:hidden;transform:scaleX(0.844);">Mo 02.02.2015</div>
<div style="top:199.00px;font-size:13px;line-height:15px;height:15px;left:726.25px;width:300px;text-align:center;transform-origin:50% 0;transform:scaleX(0.820);">13:00</div>
<div style="top:199.00px;font-size:13px;line-height:15px;height:15px;left:799.25px;width:300px;text-align:center;transform-origin:50% 0;transform:scaleX(0.820);">16:30</div>
<div style="top:199.00px;font-size:13px;line-height:15px;height:15px;left:870.2px;width:300px;text-align:center;transform-origin:50% 0;transform:scaleX(0.820);">03:30</div>
<div style="top:199.00px;font-size:13px;line-height:15px;height:15px;left:1058.7px;transform-origin:0 0;width:127.2px;overflow:hidden;transform:scaleX(0.826);">Biesenbach, Bogen</div>
<div style="top:219.00px;font-size:13px;line-height:15px;height:15px;left:28px;transform-origin:0 0;width:149.9px;overflow:hidden;transform:scaleX(0.802);">Notar Dr. Kremer</div>
<div style="top:219.00px;font-size:13px;line-height:15px;height:15px;left:179px;transform-origin:0 0;width:154.8px;overflow:hidden;transform:scaleX(0.801);">Kesselreinigung</div>
<div style="top:219.00px;font-size:13px;line-height:15px;height:15px;left:289.1px;width:300px;text-align:center;transform-origin:50% 0;transform:scaleX(0.820);">10:00</div>
<div style="top:239.00px;font-size:13px;line-height:15px;height:15px;left:28px;transform-origin:0 0;width:145.9px;overflow:hidden;transform:scaleX(0.824);">Wohnungsbau Meyer AG</div>
<div style="top:239.00px;font-size:13px;line-height:15px;height:15px;left:179px;transform-origin:0 0;width:153.7px;overflow:hidden;transform:scaleX(0.807);">Kontrolle Heizungsanlage Wartung</div>
<div style="top:239.00px;font-size:13px;line-height:15px;height:15px;left:199.7px;width:300px;text-align:center;transform-origin:50% 0;transform:scaleX(0.832);">Mo 02.02.2015</div>
<svg style="left:677px;top:239px" width="16" height="15" viewBox="0 0 16 15"><rect x="0.3" y="0.3" width="12.8" height="11.2" fill="#fdfdff"/><path d="M1 5.6 H13 M1 8.6 H13 M3.8 3 V11 M6.9 3 V11 M10 3 V11" stroke="#b4b4c8" stroke-width="0.9" fill="none"/><rect x="0" y="0" width="13.3" height="2.6" fill="#7878ee"/><rect x="1.2" y="1.1" width="6.6" height="0.9" fill="#ececff"/><rect x="8.6" y="0.4" width="4.4" height="2.2" fill="#8a6ae0"/><rect x="0" y="0" width="1" height="11.6" fill="#8c8ce0"/><rect x="12.5" y="0" width="0.9" height="5.4" fill="#3434a0"/><rect x="0.4" y="10.9" width="7" height="1.1" fill="#26266a"/><path d="M6.6 5.4 H3.6 V8.1 H6.6 V6.9" fill="none" stroke="#e8380c" stroke-width="1.2"/><circle cx="11.2" cy="9.8" r="4.9" fill="url(#ck)"/><circle cx="11" cy="9.6" r="3.3" fill="url(#cf)"/><path d="M11 7.4 V10 L12.4 11" stroke="#101018" stroke-width="1.2" fill="none"/></svg>
<svg style="left:697px;top:239px" width="11" height="14" viewBox="0 0 11 14"><path d="M1.4 1.2 H8 L11 4 V13.8 H1.4 Z" fill="#1e2468"/><path d="M0.3 0.3 H7.4 L9.8 2.8 V12.6 H0.3 Z" fill="#fcfcfc" stroke="#a9c6ee" stroke-width="0.7"/><path d="M7.2 0.3 L10 3.2 H7.2 Z" fill="#28307a"/><circle cx="8.2" cy="2.2" r="0.7" fill="#c8d4f4"/><path d="M2.2 5.2 H7.8 M2.2 7.3 H7.8 M2.2 9.4 H7.8" stroke="#9a9aa6" stroke-width="0.9"/><path d="M4 5.2 H6.4 M4 7.3 H6.4 M4 9.4 H6.4" stroke="#7f86d8" stroke-width="0.9"/></svg>
<svg style="left:713px;top:238px" width="16" height="16" viewBox="0 0 16 16"><rect x="5.6" y="0.4" width="5" height="5" fill="#fdfdfd" stroke="#9288d8" stroke-width="0.9"/><path d="M3.4 3.8 H5.2 V5.4 H10.9 V3.8 H12.6 L14 6.8 H2 Z" fill="#6c6e72"/><rect x="0.2" y="5.6" width="15.6" height="7.6" rx="1.8" fill="#85878b"/><rect x="1.2" y="6.2" width="1.4" height="5.6" rx="0.7" fill="#f0f0f0"/><rect x="13.4" y="6.2" width="1.4" height="5.6" rx="0.7" fill="#f0f0f0"/><rect x="3" y="6.8" width="10" height="3.4" fill="#d2d3d6"/><rect x="3" y="6.8" width="10" height="0.9" fill="#b6b7ba"/><rect x="7.8" y="8" width="3.1" height="1.1" fill="#4a90f0"/><rect x="2.4" y="10.2" width="11.2" height="3" fill="#4c4e52"/><rect x="5.3" y="10.8" width="5.6" height="5" fill="#f6f8ff" stroke="#9aa2cc" stroke-width="0.8"/><path d="M8.2 11.9 L9.3 13.9 H7.1 Z" fill="#3450e0"/></svg>
<div style="top:239.00px;font-size:13px;line-height:15px;height:15px;left:763.7px;transform-origin:0 0;width:83.7px;overflow:hidden;transform:scaleX(0.844);">Mo 02.02.2015</div>
<div style="top:239.00px;font-size:13px;line-height:15px;height:15px;left:726.25px;width:300px;text-align:center;transform-origin:50% 0;transform:scaleX(0.820);">10:15</div>
<div style="top:239.00px;font-size:13px;line-height:15px;height:15px;left:799.25px;width:300px;text-align:center;transform-origin:50% 0;transform:scaleX(0.820);">11:30</div>
<div style="top:239.00px;font-size:13px;line-height:15px;height:15px;left:870.2px;width:300px;text-align:center;transform-origin:50% 0;transform:scaleX(0.820);">01:15</div>
<div style="top:239.00px;font-size:13px;line-height:15px;height:15px;left:1058.7px;transform-origin:0 0;width:128.0px;overflow:hidden;transform:scaleX(0.820);">Döring</div>
<div style="left:1163px;top:60px;width:8px;height:262px;background:#f0f0f0;"></div>
<div style="left:26px;top:296px;width:1138px;height:1px;background:#8c8c8c;"></div>
<div class="thumb" style="left:44px;top:300px;width:274px;height:15px;"></div>
<svg style="left:177px;top:304px" width="8" height="7" viewBox="0 0 8 7"><path d="M0.5 0 V7 M3.5 0 V7 M6.5 0 V7" stroke="#555" stroke-width="1"/><path d="M1.5 0 V7 M4.5 0 V7 M7.5 0 V7" stroke="#fff" stroke-width="1"/></svg>
<svg style="left:31.5px;top:304px" width="4" height="7" viewBox="0 0 4 7"><path d="M4 0 L0 3.5 L4 7 Z" fill="#303030"/></svg>
<svg style="left:1153px;top:304px" width="4" height="7" viewBox="0 0 4 7"><path d="M0 0 L4 3.5 L0 7 Z" fill="#303030"/></svg>
<div style="left:25px;top:326px;width:1139px;height:1px;background:#a0a0a0;"></div>
<div style="left:25px;top:482px;width:1139px;height:1px;background:#a0a0a0;"></div>
<div style="left:177px;top:327px;width:1px;height:242px;background:#a0a0a0;"></div>
<div style="left:25px;top:329px;width:149px;height:143px;border:1px solid #a0a0a0;"></div>
<div style="left:76px;top:331px;width:1px;height:27px;background:#dcdcdc;"></div>
<div style="left:26px;top:358px;width:147px;height:1px;background:#dcdcdc;"></div>
<div style="top:337.00px;font-size:13px;line-height:15px;height:15px;left:29.5px;transform-origin:0 0;transform:scaleX(0.820);">...</div>
<svg style="left:43px;top:341px" width="9" height="5" viewBox="0 0 9 5"><path d="M0 0 H9 L4.5 5 Z" fill="#9c9a86"/></svg>
<svg style="left:59.5px;top:339px" width="11" height="9" viewBox="0 0 11 9"><path d="M0.2 0.3 L10.8 0.3 L7.1 4.3 L7.1 8.7 L4.2 8.7 L4.2 4.3 Z" fill="url(#fg)"/><path d="M0.2 0.3 L10.8 0.3 M10.8 0.3 L7.1 4.3 L7.1 8.7 M0.2 0.3 L4.2 4.3" fill="none" stroke="#3a3a3a" stroke-width="0.7"/><rect x="4.3" y="4.6" width="2.8" height="4.1" fill="url(#fs)"/></svg>
<div style="top:337.00px;font-size:13px;line-height:15px;height:15px;left:-131.8px;width:300px;text-align:right;transform-origin:100% 0;transform:scaleX(0.805);">Ressource</div>
<svg style="left:45.8px;top:363px" width="9" height="10" viewBox="0 0 9 10"><path d="M0.1 9.4 Q0.4 5.4 4.3 5.4 Q8.2 5.4 8.7 9.4 Z" fill="#e2501a"/><path d="M2 6.3 L4.3 8 L6.6 6.3 L5.6 5.4 H3 Z" fill="#fff"/><circle cx="4.1" cy="3.2" r="3.3" fill="url(#hd)"/><rect x="1.2" y="8.6" width="7.6" height="1.4" fill="#101010"/><rect x="6.7" y="7.1" width="1" height="1" fill="#4a6ae0"/></svg>
<div style="top:360.00px;font-size:13px;line-height:15px;height:15px;left:78.1px;transform-origin:0 0;width:116.1px;overflow:hidden;transform:scaleX(0.810);">Biesenbach, Peter</div>
<svg style="left:45.8px;top:379px" width="9" height="10" viewBox="0 0 9 10"><path d="M0.1 9.4 Q0.4 5.4 4.3 5.4 Q8.2 5.4 8.7 9.4 Z" fill="#e2501a"/><path d="M2 6.3 L4.3 8 L6.6 6.3 L5.6 5.4 H3 Z" fill="#fff"/><circle cx="4.1" cy="3.2" r="3.3" fill="url(#hd)"/><rect x="1.2" y="8.6" width="7.6" height="1.4" fill="#101010"/><rect x="6.7" y="7.1" width="1" height="1" fill="#4a6ae0"/></svg>
<div style="top:376.00px;font-size:13px;line-height:15px;height:15px;left:78.1px;transform-origin:0 0;width:114.6px;overflow:hidden;transform:scaleX(0.820);">Bogen, Willy</div>
<div class="hl" style="left:27px;top:392px;width:49px;height:15px;"></div>
<div class="hl" style="left:77px;top:392px;width:96px;height:15px;"></div>
<svg style="left:45.8px;top:395px" width="9" height="10" viewBox="0 0 9 10"><path d="M0.1 9.4 Q0.4 5.4 4.3 5.4 Q8.2 5.4 8.7 9.4 Z" fill="#e2501a"/><path d="M2 6.3 L4.3 8 L6.6 6.3 L5.6 5.4 H3 Z" fill="#fff"/><circle cx="4.1" cy="3.2" r="3.3" fill="url(#hd)"/><rect x="1.2" y="8.6" width="7.6" height="1.4" fill="#101010"/><rect x="6.7" y="7.1" width="1" height="1" fill="#4a6ae0"/></svg>
<div style="top:392.00px;font-size:13px;line-height:15px;height:15px;left:78.1px;transform-origin:0 0;width:114.6px;overflow:hidden;transform:scaleX(0.820);">Döring, Lutz</div>
<div style="left:26px;top:439px;width:147px;height:1px;background:#8c8c8c;"></div>
<div style="left:26px;top:455px;width:147px;height:16px;background:#e9e9e9;"></div>
<div class="thumb" style="left:44px;top:455px;width:26px;height:15px;"></div>
<svg style="left:53px;top:459px" width="8" height="7" viewBox="0 0 8 7"><path d="M0.5 0 V7 M3.5 0 V7 M6.5 0 V7" stroke="#555" stroke-width="1"/><path d="M1.5 0 V7 M4.5 0 V7 M7.5 0 V7" stroke="#fff" stroke-width="1"/></svg>
<svg style="left:32px;top:459px" width="4" height="7" viewBox="0 0 4 7"><path d="M4 0 L0 3.5 L4 7 Z" fill="#303030"/></svg>
<svg style="left:163px;top:459px" width="4" height="7" viewBox="0 0 4 7"><path d="M0 0 L4 3.5 L0 7 Z" fill="#303030"/></svg>
<div style="left:182px;top:329px;width:963px;height:127px;border:1px solid #a0a0a0;"></div>
<div style="left:183px;top:343px;width:961px;height:1px;background:#b4b4b4;"></div>
<div style="left:183px;top:359px;width:961px;height:1px;background:#a0a0a0;"></div>
<div style="left:222px;top:344px;width:1px;height:111px;background:#d4d4d4;"></div>
<div style="left:262px;top:344px;width:1px;height:111px;background:#d4d4d4;"></div>
<div style="left:302px;top:344px;width:1px;height:111px;background:#d4d4d4;"></div>
<div style="left:342px;top:344px;width:1px;height:111px;background:#d4d4d4;"></div>
<div style="left:382px;top:344px;width:1px;height:111px;background:#d4d4d4;"></div>
<div style="left:423px;top:344px;width:1px;height:111px;background:#d4d4d4;"></div>
<div style="left:463px;top:344px;width:1px;height:111px;background:#d4d4d4;"></div>
<div style="left:503px;top:344px;width:1px;height:111px;background:#d4d4d4;"></div>
<div style="left:543px;top:344px;width:1px;height:111px;background:#d4d4d4;"></div>
<div style="left:583px;top:344px;width:1px;height:111px;background:#d4d4d4;"></div>
<div style="left:623px;top:344px;width:1px;height:111px;background:#d4d4d4;"></div>
<div style="left:663px;top:344px;width:1px;height:111px;background:#d4d4d4;"></div>
<div style="left:703px;top:344px;width:1px;height:111px;background:#d4d4d4;"></div>
<div style="left:743px;top:344px;width:1px;height:111px;background:#d4d4d4;"></div>
<div style="left:783px;top:344px;width:1px;height:111px;background:#d4d4d4;"></div>
<div style="left:823px;top:344px;width:1px;height:111px;background:#d4d4d4;"></div>
<div style="left:863px;top:344px;width:1px;height:111px;background:#d4d4d4;"></div>
<div style="left:904px;top:344px;width:1px;height:111px;background:#d4d4d4;"></div>
<div style="left:944px;top:344px;width:1px;height:111px;background:#d4d4d4;"></div>
<div style="left:984px;top:344px;width:1px;height:111px;background:#d4d4d4;"></div>
<div style="left:1024px;top:344px;width:1px;height:111px;background:#d4d4d4;"></div>
<div style="left:1064px;top:344px;width:1px;height:111px;background:#d4d4d4;"></div>
<div style="left:1104px;top:344px;width:1px;height:111px;background:#d4d4d4;"></div>
<div style="left:183px;top:375px;width:961px;height:1px;background:#d4d4d4;"></div>
<div style="left:183px;top:391px;width:961px;height:1px;background:#d4d4d4;"></div>
<div style="left:183px;top:407px;width:961px;height:1px;background:#d4d4d4;"></div>
<div style="left:183px;top:423px;width:961px;height:1px;background:#d4d4d4;"></div>
<div style="left:183px;top:439px;width:961px;height:1px;background:#808080;"></div>
<div style="top:328.00px;font-size:13px;line-height:15px;height:15px;left:514.2px;width:300px;text-align:center;transform-origin:50% 0;transform:scaleX(0.814);">Montag, 2. Februar 2015</div>
<div style="top:344.00px;font-size:13px;line-height:15px;height:15px;left:53.1417px;width:300px;text-align:center;transform-origin:50% 0;transform:scaleX(0.820);">06:00</div>
<div style="top:344.00px;font-size:13px;line-height:15px;height:15px;left:93.225px;width:300px;text-align:center;transform-origin:50% 0;transform:scaleX(0.820);">06:30</div>
<div style="top:344.00px;font-size:13px;line-height:15px;height:15px;left:133.308px;width:300px;text-align:center;transform-origin:50% 0;transform:scaleX(0.820);">07:00</div>
<div style="top:344.00px;font-size:13px;line-height:15px;height:15px;left:173.392px;width:300px;text-align:center;transform-origin:50% 0;transform:scaleX(0.820);">07:30</div>
<div style="top:344.00px;font-size:13px;line-height:15px;height:15px;left:213.475px;width:300px;text-align:center;transform-origin:50% 0;transform:scaleX(0.820);">08:00</div>
<div style="top:344.00px;font-size:13px;line-height:15px;height:15px;left:253.558px;width:300px;text-align:center;transform-origin:50% 0;transform:scaleX(0.820);">08:30</div>
<div style="top:344.00px;font-size:13px;line-height:15px;height:15px;left:293.642px;width:300px;text-align:center;transform-origin:50% 0;transform:scaleX(0.820);">09:00</div>
<div style="top:344.00px;font-size:13px;line-height:15px;height:15px;left:333.725px;width:300px;text-align:center;transform-origin:50% 0;transform:scaleX(0.820);">09:30</div>
<div style="top:344.00px;font-size:13px;line-height:15px;height:15px;left:373.808px;width:300px;text-align:center;transform-origin:50% 0;transform:scaleX(0.820);">10:00</div>
<div style="top:344.00px;font-size:13px;line-height:15px;height:15px;left:413.892px;width:300px;text-align:center;transform-origin:50% 0;transform:scaleX(0.820);">10:30</div>
<div style="top:344.00px;font-size:13px;line-height:15px;height:15px;left:453.975px;width:300px;text-align:center;transform-origin:50% 0;transform:scaleX(0.820);">11:00</div>
<div style="top:344.00px;font-size:13px;line-height:15px;height:15px;left:494.058px;width:300px;text-align:center;transform-origin:50% 0;transform:scaleX(0.820);">11:30</div>
<div style="top:344.00px;font-size:13px;line-height:15px;height:15px;left:534.142px;width:300px;text-align:center;transform-origin:50% 0;transform:scaleX(0.820);">12:00</div>
<div style="top:344.00px;font-size:13px;line-height:15px;height:15px;left:574.225px;width:300px;text-align:center;transform-origin:50% 0;transform:scaleX(0.820);">12:30</div>
<div style="top:344.00px;font-size:13px;line-height:15px;height:15px;left:614.308px;width:300px;text-align:center;transform-origin:50% 0;transform:scaleX(0.820);">13:00</div>
<div style="top:344.00px;font-size:13px;line-height:15px;height:15px;left:654.392px;width:300px;text-align:center;transform-origin:50% 0;transform:scaleX(0.820);">13:30</div>
<div style="top:344.00px;font-size:13px;line-height:15px;height:15px;left:694.475px;width:300px;text-align:center;transform-origin:50% 0;transform:scaleX(0.820);">14:00</div>
<div style="top:344.00px;font-size:13px;line-height:15px;height:15px;left:734.558px;width:300px;text-align:center;transform-origin:50% 0;transform:scaleX(0.820);">14:30</div>
<div style="top:344.00px;font-size:13px;line-height:15px;height:15px;left:774.642px;width:300px;text-align:center;transform-origin:50% 0;transform:scaleX(0.820);">15:00</div>
<div style="top:344.00px;font-size:13px;line-height:15px;height:15px;left:814.725px;width:300px;text-align:center;transform-origin:50% 0;transform:scaleX(0.820);">15:30</div>
<div style="top:344.00px;font-size:13px;line-height:15px;height:15px;left:854.808px;width:300px;text-align:center;transform-origin:50% 0;transform:scaleX(0.820);">16:00</div>
<div style="top:344.00px;font-size:13px;line-height:15px;height:15px;left:894.892px;width:300px;text-align:center;transform-origin:50% 0;transform:scaleX(0.820);">16:30</div>
<div style="top:344.00px;font-size:13px;line-height:15px;height:15px;left:934.975px;width:300px;text-align:center;transform-origin:50% 0;transform:scaleX(0.820);">17:00</div>
<div style="top:344.00px;font-size:13px;line-height:15px;height:15px;left:975.058px;width:300px;text-align:center;transform-origin:50% 0;transform:scaleX(0.820);">17:30</div>
<div class="bar" style="left:343px;top:362px;width:221px;"></div>
<div class="num" style="left:344.3px;top:361px;"></div>
<div style="top:362.14px;font-size:10px;line-height:12px;height:12px;left:200.4px;width:300px;text-align:center;transform-origin:50% 0;transform:scaleX(0.950);color:#fff;font-weight:bold;">1</div>
<div style="top:361.27px;font-size:11.5px;line-height:13.5px;height:13.5px;left:357.6px;transform-origin:0 0;width:224.4px;overflow:hidden;transform:scaleX(0.918);">Brendel</div>
<div class="bar" style="left:583px;top:362px;width:121px;"></div>
<div class="num" style="left:585.6px;top:361px;"></div>
<div style="top:362.14px;font-size:10px;line-height:12px;height:12px;left:441.7px;width:300px;text-align:center;transform-origin:50% 0;transform:scaleX(0.950);color:#fff;font-weight:bold;">2</div>
<div style="top:361.27px;font-size:11.5px;line-height:13.5px;height:13.5px;left:598.9px;transform-origin:0 0;width:113.6px;overflow:hidden;transform:scaleX(0.922);">Hansen &amp; Hansen</div>
<div class="bar" style="left:744px;top:362px;width:281px;"></div>
<div class="num" style="left:744.1px;top:361px;"></div>
<div style="top:362.14px;font-size:10px;line-height:12px;height:12px;left:600.2px;width:300px;text-align:center;transform-origin:50% 0;transform:scaleX(0.950);color:#fff;font-weight:bold;">3</div>
<div style="top:361.27px;font-size:11.5px;line-height:13.5px;height:13.5px;left:757.4px;transform-origin:0 0;width:281.4px;overflow:hidden;transform:scaleX(0.950);">Huber</div>
<div class="bar" style="left:343px;top:378px;width:221px;"></div>
<div class="num" style="left:344.3px;top:377px;"></div>
<div style="top:378.14px;font-size:10px;line-height:12px;height:12px;left:200.4px;width:300px;text-align:center;transform-origin:50% 0;transform:scaleX(0.950);color:#fff;font-weight:bold;">1</div>
<div style="top:377.27px;font-size:11.5px;line-height:13.5px;height:13.5px;left:357.6px;transform-origin:0 0;width:224.4px;overflow:hidden;transform:scaleX(0.918);">Brendel</div>
<div class="bar" style="left:583px;top:378px;width:121px;"></div>
<div class="num" style="left:585.6px;top:377px;"></div>
<div style="top:378.14px;font-size:10px;line-height:12px;height:12px;left:441.7px;width:300px;text-align:center;transform-origin:50% 0;transform:scaleX(0.950);color:#fff;font-weight:bold;">2</div>
<div style="top:377.27px;font-size:11.5px;line-height:13.5px;height:13.5px;left:598.9px;transform-origin:0 0;width:113.6px;overflow:hidden;transform:scaleX(0.922);">Hansen &amp; Hansen</div>
<div class="bar" style="left:744px;top:378px;width:281px;"></div>
<div class="num" style="left:744.1px;top:377px;"></div>
<div style="top:378.14px;font-size:10px;line-height:12px;height:12px;left:600.2px;width:300px;text-align:center;transform-origin:50% 0;transform:scaleX(0.950);color:#fff;font-weight:bold;">3</div>
<div style="top:377.27px;font-size:11.5px;line-height:13.5px;height:13.5px;left:757.4px;transform-origin:0 0;width:281.4px;overflow:hidden;transform:scaleX(0.950);">Huber</div>
<div class="bar" style="left:343px;top:394px;width:161px;"></div>
<div class="num" style="left:344.3px;top:393px;"></div>
<div style="top:394.14px;font-size:10px;line-height:12px;height:12px;left:200.4px;width:300px;text-align:center;transform-origin:50% 0;transform:scaleX(0.950);color:#fff;font-weight:bold;">1</div>
<div style="top:393.27px;font-size:11.5px;line-height:13.5px;height:13.5px;left:357.6px;transform-origin:0 0;width:156.0px;overflow:hidden;transform:scaleX(0.936);">Karl Schulze KG</div>
<div class="bar" style="left:523px;top:394px;width:101px;"></div>
<div class="num" style="left:525.4px;top:393px;"></div>
<div style="top:394.14px;font-size:10px;line-height:12px;height:12px;left:381.5px;width:300px;text-align:center;transform-origin:50% 0;transform:scaleX(0.950);color:#fff;font-weight:bold;">2</div>
<div style="top:393.27px;font-size:11.5px;line-height:13.5px;height:13.5px;left:538.7px;transform-origin:0 0;width:89.5px;overflow:hidden;transform:scaleX(0.950);">Wohnungsbau Meyer AG</div>
<div class="bar" style="left:624px;top:394px;width:80px;"></div>
<div class="num" style="left:626.0px;top:393px;"></div>
<div style="top:394.14px;font-size:10px;line-height:12px;height:12px;left:482.1px;width:300px;text-align:center;transform-origin:50% 0;transform:scaleX(0.950);color:#fff;font-weight:bold;">3</div>
<div style="top:393.27px;font-size:11.5px;line-height:13.5px;height:13.5px;left:639.3px;transform-origin:0 0;width:68.1px;overflow:hidden;transform:scaleX(0.945);">Biedenhoff</div>
<div class="bar" style="left:744px;top:394px;width:301px;"></div>
<div class="num" style="left:744.1px;top:393px;"></div>
<div style="top:394.14px;font-size:10px;line-height:12px;height:12px;left:600.2px;width:300px;text-align:center;transform-origin:50% 0;transform:scaleX(0.950);color:#fff;font-weight:bold;">4</div>
<div style="top:393.27px;font-size:11.5px;line-height:13.5px;height:13.5px;left:757.4px;transform-origin:0 0;width:316.0px;overflow:hidden;transform:scaleX(0.909);">Schulz GmbH</div>
<div style="left:25px;top:485px;width:149px;height:66px;border:1px solid #a0a0a0;border-bottom:none;border-right-color:#dcdcdc;"></div>
<div style="left:26px;top:501px;width:147px;height:1px;background:#dcdcdc;"></div>
<div style="left:125px;top:487px;width:1px;height:14px;background:#dcdcdc;"></div>
<div style="top:487.00px;font-size:13px;line-height:15px;height:15px;left:31.2px;transform-origin:0 0;transform:scaleX(0.805);">Betriebsauslastung</div>
<div style="top:487.00px;font-size:13px;line-height:15px;height:15px;left:-129.7px;width:300px;text-align:right;transform-origin:100% 0;transform:scaleX(0.820);">Stunden</div>
<div style="left:30px;top:506px;width:10px;height:10px;background:#7ecfb8;"></div>
<div style="top:503.00px;font-size:13px;line-height:15px;height:15px;left:44px;transform-origin:0 0;transform:scaleX(0.799);">Kapazität</div>
<div style="top:503.00px;font-size:13px;line-height:15px;height:15px;left:-127.7px;width:300px;text-align:right;transform-origin:100% 0;transform:scaleX(0.820);">3</div>
<div style="left:30px;top:522px;width:10px;height:10px;background:#e6e600;"></div>
<div style="top:519.00px;font-size:13px;line-height:15px;height:15px;left:44px;transform-origin:0 0;transform:scaleX(0.815);">Verplante Zeit</div>
<div style="top:519.00px;font-size:13px;line-height:15px;height:15px;left:-127.7px;width:300px;text-align:right;transform-origin:100% 0;transform:scaleX(0.820);">2</div>
<div style="left:30px;top:538px;width:10px;height:10px;background:#808080;"></div>
<div style="top:535.00px;font-size:13px;line-height:15px;height:15px;left:44px;transform-origin:0 0;transform:scaleX(0.799);">Istzeiten</div>
<div style="top:535.00px;font-size:13px;line-height:15px;height:15px;left:-127.7px;width:300px;text-align:right;transform-origin:100% 0;transform:scaleX(0.820);">1</div>
<div style="left:182px;top:502px;width:963px;height:49px;border:1px solid #a0a0a0;"></div>
<div style="left:222px;top:503px;width:1px;height:47px;background:#d4d4d4;"></div>
<div style="left:262px;top:503px;width:1px;height:47px;background:#d4d4d4;"></div>
<div style="left:302px;top:503px;width:1px;height:47px;background:#d4d4d4;"></div>
<div style="left:342px;top:503px;width:1px;height:47px;background:#d4d4d4;"></div>
<div style="left:382px;top:503px;width:1px;height:47px;background:#d4d4d4;"></div>
<div style="left:423px;top:503px;width:1px;height:47px;background:#d4d4d4;"></div>
<div style="left:463px;top:503px;width:1px;height:47px;background:#d4d4d4;"></div>
<div style="left:503px;top:503px;width:1px;height:47px;background:#d4d4d4;"></div>
<div style="left:543px;top:503px;width:1px;height:47px;background:#d4d4d4;"></div>
<div style="left:583px;top:503px;width:1px;height:47px;background:#d4d4d4;"></div>
<div style="left:623px;top:503px;width:1px;height:47px;background:#d4d4d4;"></div>
<div style="left:663px;top:503px;width:1px;height:47px;background:#d4d4d4;"></div>
<div style="left:703px;top:503px;width:1px;height:47px;background:#d4d4d4;"></div>
<div style="left:743px;top:503px;width:1px;height:47px;background:#d4d4d4;"></div>
<div style="left:783px;top:503px;width:1px;height:47px;background:#d4d4d4;"></div>
<div style="left:823px;top:503px;width:1px;height:47px;background:#d4d4d4;"></div>
<div style="left:863px;top:503px;width:1px;height:47px;background:#d4d4d4;"></div>
<div style="left:904px;top:503px;width:1px;height:47px;background:#d4d4d4;"></div>
<div style="left:944px;top:503px;width:1px;height:47px;background:#d4d4d4;"></div>
<div style="left:984px;top:503px;width:1px;height:47px;background:#d4d4d4;"></div>
<div style="left:1024px;top:503px;width:1px;height:47px;background:#d4d4d4;"></div>
<div style="left:1064px;top:503px;width:1px;height:47px;background:#d4d4d4;"></div>
<div style="left:1104px;top:503px;width:1px;height:47px;background:#d4d4d4;"></div>
<div style="left:183px;top:518px;width:961px;height:1px;background:#d4d4d4;"></div>
<div style="left:183px;top:534px;width:961px;height:1px;background:#d4d4d4;"></div>
<div style="left:704px;top:526px;width:39px;height:24px;background:#f1f1f1;"></div>
<div style="left:342px;top:526px;width:40px;height:24px;background:linear-gradient(#aedb74,#c9e8a3);border-left:1px solid #8cc63f;border-top:1px solid #a8d568;"></div>
<div style="left:382px;top:526px;width:41px;height:24px;background:linear-gradient(#aedb74,#c9e8a3);border-left:1px solid #8cc63f;border-top:1px solid #a8d568;"></div>
<div style="left:424px;top:526px;width:39px;height:12px;background:#f1f1f1;border-bottom:1px solid #fff;"></div>
<div style="left:423px;top:538px;width:40px;height:12px;background:linear-gradient(#aedb74,#c9e8a3);border-left:1px solid #8cc63f;border-top:1px solid #a8d568;"></div>
<div style="left:463px;top:526px;width:40px;height:24px;background:linear-gradient(#aedb74,#c9e8a3);border-left:1px solid #8cc63f;border-top:1px solid #a8d568;"></div>
<div style="left:504px;top:526px;width:40px;height:4px;background:#b9e6dc;"></div>
<div style="left:503px;top:530px;width:40px;height:20px;background:linear-gradient(#aedb74,#c9e8a3);border-left:1px solid #8cc63f;border-top:1px solid #a8d568;"></div>
<div style="left:544px;top:526px;width:40px;height:8px;background:#b9e6dc;"></div>
<div style="left:543px;top:534px;width:40px;height:16px;background:linear-gradient(#aedb74,#c9e8a3);border-left:1px solid #8cc63f;border-top:1px solid #a8d568;"></div>
<div style="left:583px;top:526px;width:40px;height:24px;background:linear-gradient(#aedb74,#c9e8a3);border-left:1px solid #8cc63f;border-top:1px solid #a8d568;"></div>
<div style="left:623px;top:526px;width:40px;height:24px;background:linear-gradient(#aedb74,#c9e8a3);border-left:1px solid #8cc63f;border-top:1px solid #a8d568;"></div>
<div style="left:663px;top:526px;width:40px;height:24px;background:linear-gradient(#aedb74,#c9e8a3);border-left:1px solid #8cc63f;border-top:1px solid #a8d568;"></div>
<div style="left:743px;top:526px;width:40px;height:24px;background:linear-gradient(#aedb74,#c9e8a3);border-left:1px solid #8cc63f;border-top:1px solid #a8d568;"></div>
<div style="left:783px;top:526px;width:40px;height:24px;background:linear-gradient(#aedb74,#c9e8a3);border-left:1px solid #8cc63f;border-top:1px solid #a8d568;"></div>
<div style="left:823px;top:526px;width:40px;height:24px;background:linear-gradient(#aedb74,#c9e8a3);border-left:1px solid #8cc63f;border-top:1px solid #a8d568;"></div>
<div style="left:863px;top:526px;width:41px;height:24px;background:linear-gradient(#aedb74,#c9e8a3);border-left:1px solid #8cc63f;border-top:1px solid #a8d568;"></div>
<div style="left:904px;top:526px;width:40px;height:24px;background:linear-gradient(#aedb74,#c9e8a3);border-left:1px solid #8cc63f;border-top:1px solid #a8d568;"></div>
<div style="left:944px;top:526px;width:40px;height:24px;background:linear-gradient(#aedb74,#c9e8a3);border-left:1px solid #8cc63f;border-top:1px solid #a8d568;"></div>
<div style="left:984px;top:526px;width:40px;height:24px;background:linear-gradient(#aedb74,#c9e8a3);border-left:1px solid #8cc63f;border-top:1px solid #a8d568;"></div>
<div style="left:1025px;top:538px;width:40px;height:12px;background:#b9e6dc;"></div>
<div style="left:343px;top:534px;width:80px;height:1px;background:rgba(110,170,50,.35);"></div>
<div style="left:464px;top:534px;width:239px;height:1px;background:rgba(110,170,50,.35);"></div>
<div style="left:744px;top:534px;width:280px;height:1px;background:rgba(110,170,50,.35);"></div>
<div class="btn" style="left:182px;top:554px;width:45px;"></div>
<div style="top:555.00px;font-size:13px;line-height:15px;height:15px;left:53.9px;width:300px;text-align:center;transform-origin:50% 0;transform:scaleX(0.809);">&lt; Monat</div>
<div class="btn" style="left:229px;top:554px;width:51px;"></div>
<div style="top:555.00px;font-size:13px;line-height:15px;height:15px;left:103.9px;width:300px;text-align:center;transform-origin:50% 0;transform:scaleX(0.834);">&lt; Woche</div>
<div class="btn" style="left:282px;top:554px;width:36px;"></div>
<div style="top:555.00px;font-size:13px;line-height:15px;height:15px;left:149.4px;width:300px;text-align:center;transform-origin:50% 0;transform:scaleX(0.820);">&lt; Tag</div>
<div class="btn" style="left:319px;top:554px;width:36px;"></div>
<div style="top:555.00px;font-size:13px;line-height:15px;height:15px;left:186.4px;width:300px;text-align:center;transform-origin:50% 0;transform:scaleX(0.820);">Heute</div>
<div class="btn" style="left:357px;top:554px;width:36px;"></div>
<div style="top:555.00px;font-size:13px;line-height:15px;height:15px;left:224.4px;width:300px;text-align:center;transform-origin:50% 0;transform:scaleX(0.820);">Tag &gt;</div>
<div class="btn" style="left:394px;top:554px;width:50px;"></div>
<div style="top:555.00px;font-size:13px;line-height:15px;height:15px;left:268.4px;width:300px;text-align:center;transform-origin:50% 0;transform:scaleX(0.820);">Woche &gt;</div>
<div class="btn" style="left:447px;top:554px;width:46px;"></div>
<div style="top:555.00px;font-size:13px;line-height:15px;height:15px;left:319.4px;width:300px;text-align:center;transform-origin:50% 0;transform:scaleX(0.792);">Monat &gt;</div>
<div style="left:496px;top:554px;width:651px;height:15px;background:#e6e6e6;"></div>
<svg style="left:500px;top:557px" width="4" height="7" viewBox="0 0 4 7"><path d="M4 0 L0 3.5 L4 7 Z" fill="#303030"/></svg>
<svg style="left:1137px;top:557px" width="4" height="7" viewBox="0 0 4 7"><path d="M0 0 L4 3.5 L0 7 Z" fill="#303030"/></svg>
<div class="thumb" style="left:813px;top:554px;width:15px;height:14px;"></div>
</body></html>
